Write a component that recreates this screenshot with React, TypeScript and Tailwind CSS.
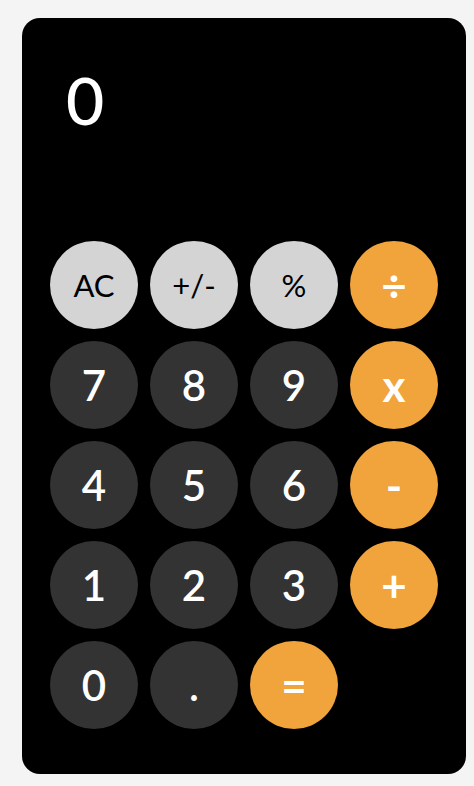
type Key = { label: string; kind: "fn" | "num" | "op" };

const keys: Key[] = [
  { label: "AC", kind: "fn" },
  { label: "+/-", kind: "fn" },
  { label: "%", kind: "fn" },
  { label: "÷", kind: "op" },
  { label: "7", kind: "num" },
  { label: "8", kind: "num" },
  { label: "9", kind: "num" },
  { label: "x", kind: "op" },
  { label: "4", kind: "num" },
  { label: "5", kind: "num" },
  { label: "6", kind: "num" },
  { label: "-", kind: "op" },
  { label: "1", kind: "num" },
  { label: "2", kind: "num" },
  { label: "3", kind: "num" },
  { label: "+", kind: "op" },
  { label: "0", kind: "num" },
  { label: ".", kind: "num" },
  { label: "=", kind: "op" },
];

const styles = {
  fn: "bg-[#d4d4d4] text-black text-[31px] font-normal",
  num: "bg-[#333333] text-white text-[42px] font-semibold",
  op: "bg-[#f1a33c] text-white text-[44px] font-bold",
};

export default function App() {
  return (
    <div
      className="min-h-screen bg-[#f4f4f4] px-[22px] pt-[18px]"
      style={{ fontFamily: "Lato, 'Open Sans', sans-serif" }}
    >
      <div className="h-[756px] w-[444px] rounded-[18px] bg-black">
        <div className="h-[223px] pl-[44px] pt-[49px] text-[66px] font-medium leading-none text-white">0</div>
        <div className="grid grid-cols-4 gap-3 px-[28px]">
          {keys.map((k) => (
            <button
              key={k.label}
              className={`flex h-[88px] w-[88px] items-center justify-center rounded-full leading-none ${styles[k.kind]}`}
            >
              {k.label}
            </button>
          ))}
        </div>
      </div>
    </div>
  );
}
